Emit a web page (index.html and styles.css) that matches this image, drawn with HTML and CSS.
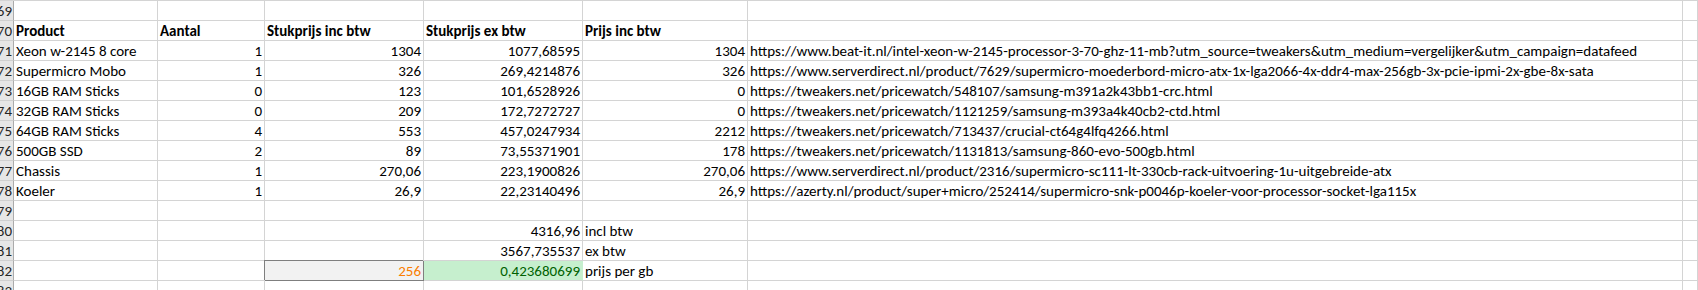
FILE: index.html
```html
<!DOCTYPE html>
<html lang="nl">
<head>
<meta charset="utf-8">
<title>Sheet</title>
<link rel="stylesheet" href="styles.css">
</head>
<body>
<div class="sheet">
  <div class="h">69</div><div class="c"></div><div class="c"></div><div class="c"></div><div class="c"></div><div class="c"></div><div class="c"></div><div class="c"></div>
  <div class="h">70</div><div class="c b">Product</div><div class="c b">Aantal</div><div class="c b">Stukprijs inc btw</div><div class="c b">Stukprijs ex btw</div><div class="c b">Prijs inc btw</div><div class="c"></div><div class="c"></div>
  <div class="h">71</div><div class="c">Xeon w-2145 8 core</div><div class="c r">1</div><div class="c r">1304</div><div class="c r">1077,68595</div><div class="c r">1304</div><div class="c">https://www.beat-it.nl/intel-xeon-w-2145-processor-3-70-ghz-11-mb?utm_source=tweakers&amp;utm_medium=vergelijker&amp;utm_campaign=datafeed</div><div class="c"></div>
  <div class="h">72</div><div class="c">Supermicro Mobo</div><div class="c r">1</div><div class="c r">326</div><div class="c r">269,4214876</div><div class="c r">326</div><div class="c">https://www.serverdirect.nl/product/7629/supermicro-moederbord-micro-atx-1x-lga2066-4x-ddr4-max-256gb-3x-pcie-ipmi-2x-gbe-8x-sata</div><div class="c"></div>
  <div class="h">73</div><div class="c">16GB RAM Sticks</div><div class="c r">0</div><div class="c r">123</div><div class="c r">101,6528926</div><div class="c r">0</div><div class="c">https://tweakers.net/pricewatch/548107/samsung-m391a2k43bb1-crc.html</div><div class="c"></div>
  <div class="h">74</div><div class="c">32GB RAM Sticks</div><div class="c r">0</div><div class="c r">209</div><div class="c r">172,7272727</div><div class="c r">0</div><div class="c">https://tweakers.net/pricewatch/1121259/samsung-m393a4k40cb2-ctd.html</div><div class="c"></div>
  <div class="h">75</div><div class="c">64GB RAM Sticks</div><div class="c r">4</div><div class="c r">553</div><div class="c r">457,0247934</div><div class="c r">2212</div><div class="c">https://tweakers.net/pricewatch/713437/crucial-ct64g4lfq4266.html</div><div class="c"></div>
  <div class="h">76</div><div class="c">500GB SSD</div><div class="c r">2</div><div class="c r">89</div><div class="c r">73,55371901</div><div class="c r">178</div><div class="c">https://tweakers.net/pricewatch/1131813/samsung-860-evo-500gb.html</div><div class="c"></div>
  <div class="h">77</div><div class="c">Chassis</div><div class="c r">1</div><div class="c r">270,06</div><div class="c r">223,1900826</div><div class="c r">270,06</div><div class="c">https://www.serverdirect.nl/product/2316/supermicro-sc111-lt-330cb-rack-uitvoering-1u-uitgebreide-atx</div><div class="c"></div>
  <div class="h">78</div><div class="c">Koeler</div><div class="c r">1</div><div class="c r">26,9</div><div class="c r">22,23140496</div><div class="c r">26,9</div><div class="c">https://azerty.nl/product/super+micro/252414/supermicro-snk-p0046p-koeler-voor-processor-socket-lga115x</div><div class="c"></div>
  <div class="h">79</div><div class="c"></div><div class="c"></div><div class="c"></div><div class="c"></div><div class="c"></div><div class="c"></div><div class="c"></div>
  <div class="h">80</div><div class="c"></div><div class="c"></div><div class="c"></div><div class="c r">4316,96</div><div class="c">incl btw</div><div class="c"></div><div class="c"></div>
  <div class="h">81</div><div class="c"></div><div class="c"></div><div class="c"></div><div class="c r">3567,735537</div><div class="c">ex btw</div><div class="c"></div><div class="c"></div>
  <div class="h">82</div><div class="c"></div><div class="c"></div><div class="c r calc">256</div><div class="c r good">0,423680699</div><div class="c">prijs per gb</div><div class="c"></div><div class="c"></div>
  <div class="h">83</div><div class="c"></div><div class="c"></div><div class="c"></div><div class="c"></div><div class="c"></div><div class="c"></div><div class="c"></div>
</div>
</body>
</html>
```
FILE: styles.css
```css
html, body {
  margin: 0;
  padding: 0;
  background: #ffffff;
  overflow: hidden;
  height: 290px;
}
.sheet {
  display: grid;
  grid-template-columns: 14px 144px 107px 159px 159px 165px 935px 1fr;
  grid-auto-rows: 20px;
  border-top: 1px solid #d4d4d4;
  font-family: Carlito, "Liberation Sans", Arial, sans-serif;
  font-size: 15px;
  color: #000000;
}
.c, .h {
  box-sizing: border-box;
  height: 20px;
  line-height: 19px;
  padding: 1px 2px 0 2px;
  border-right: 1px solid #d4d4d4;
  border-bottom: 1px solid #d4d4d4;
  white-space: nowrap;
  overflow: visible;
}
.h {
  background: #e6e6e6;
  border-right-color: #ababab;
  border-bottom-color: #d0d0d0;
  color: #262626;
  text-align: right;
  padding: 1px 1px 0 0;
  overflow: hidden;
  direction: rtl;
}
.r { text-align: right; }
.b { font-weight: bold; }
.calc {
  background: #f2f2f2;
  color: #fa7d00;
  border-right-color: #7f7f7f;
  border-bottom-color: #7f7f7f;
  box-shadow: -1px -1px 0 #7f7f7f;
}
.good {
  background: #c6efce;
  color: #006100;
  border-right-color: #c6efce;
}
```
